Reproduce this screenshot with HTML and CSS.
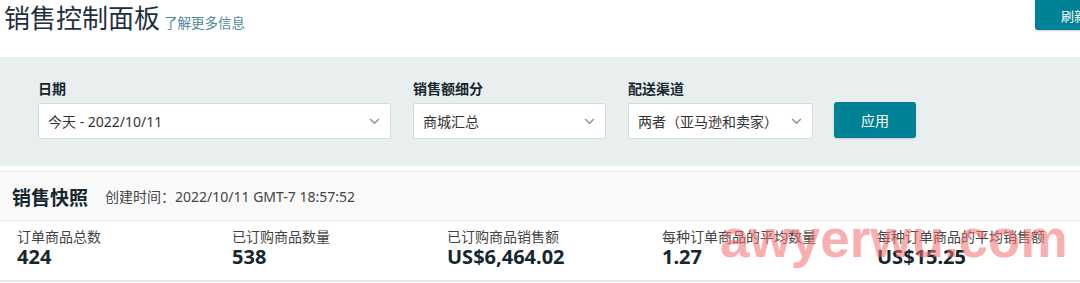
FILE: index.html
```html
<!DOCTYPE html>
<html lang="zh-CN">
<head>
<meta charset="utf-8">
<title>销售控制面板</title>
<link rel="stylesheet" href="styles.css">
</head>
<body>
<div class="page">
  <header class="top">
    <div class="title-wrap">
      <h1 class="title">销售控制面板</h1>
      <a class="learn" href="#">了解更多信息</a>
    </div>
    <button class="refresh">刷新</button>
  </header>

  <section class="filters">
    <div class="field f-date">
      <label class="flabel">日期</label>
      <div class="select"><span>今天 - 2022/10/11</span><svg class="chev" viewBox="0 0 12 8" width="11" height="7"><path d="M1 1.2 L6 6 L11 1.2" fill="none" stroke="#8a9499" stroke-width="1.6"/></svg></div>
    </div>
    <div class="field f-break">
      <label class="flabel">销售额细分</label>
      <div class="select"><span>商城汇总</span><svg class="chev" viewBox="0 0 12 8" width="11" height="7"><path d="M1 1.2 L6 6 L11 1.2" fill="none" stroke="#8a9499" stroke-width="1.6"/></svg></div>
    </div>
    <div class="field f-chan">
      <label class="flabel">配送渠道</label>
      <div class="select"><span>两者（亚马逊和卖家）</span><svg class="chev" viewBox="0 0 12 8" width="11" height="7"><path d="M1 1.2 L6 6 L11 1.2" fill="none" stroke="#8a9499" stroke-width="1.6"/></svg></div>
    </div>
    <button class="apply">应用</button>
  </section>

  <section class="snapshot">
    <h2 class="snap-title">销售快照</h2>
    <span class="snap-time">创建时间：2022/10/11 GMT-7 18:57:52</span>
  </section>

  <section class="metrics">
    <div class="metric"><div class="mlabel">订单商品总数</div><div class="mvalue">424</div></div>
    <div class="metric"><div class="mlabel">已订购商品数量</div><div class="mvalue">538</div></div>
    <div class="metric"><div class="mlabel">已订购商品销售额</div><div class="mvalue">US$6,464.02</div></div>
    <div class="metric"><div class="mlabel">每种订单商品的平均数量</div><div class="mvalue">1.27</div></div>
    <div class="metric"><div class="mlabel">每种订单商品的平均销售额</div><div class="mvalue">US$15.25</div></div>
  </section>

  <div class="watermark">awyerwu.com</div>
</div>
</body>
</html>
```
FILE: styles.css
```css
* { box-sizing: border-box; }
html, body { margin: 0; padding: 0; }
body {
  width: 1080px;
  height: 283px;
  overflow: hidden;
  background: #ffffff;
  font-family: "Noto Sans", "Noto Sans CJK SC", sans-serif;
  color: #111;
}
.page { position: relative; width: 1080px; height: 283px; overflow: hidden; }

.top {
  height: 57px;
  display: flex;
  justify-content: space-between;
  align-items: flex-start;
}
.title-wrap {
  display: flex;
  align-items: baseline;
  padding-left: 4px;
}
.title {
  margin: 0;
  font-family: "Noto Sans CJK SC", sans-serif;
  font-weight: 400;
  font-size: 26px;
  line-height: 34px;
  color: #232f3e;
}
.learn {
  margin-left: 4px;
  font-family: "Noto Sans CJK SC", sans-serif;
  font-size: 13.5px;
  color: #4e8a9a;
  text-decoration: none;
}
.refresh {
  flex: none;
  width: 76px;
  height: 30px;
  margin-right: -31px;
  border: none;
  border-radius: 0 0 0 3px;
  background: #008296;
  color: #fff;
  font-family: "Noto Sans CJK SC", sans-serif;
  font-size: 13px;
  padding: 0 0 0 26px;
  text-align: left;
  white-space: nowrap;
  box-shadow: 0 1px 2px rgba(0,0,0,0.2);
}

.filters {
  height: 109px;
  background: #e9eeef;
  display: flex;
  align-items: flex-end;
  padding: 0 0 27px 38px;
  gap: 22px;
}
.field { display: flex; flex-direction: column; }
.f-date { width: 353px; }
.f-break { width: 193px; }
.f-chan { width: 185px; }
.flabel {
  font-family: "Noto Sans CJK SC", sans-serif;
  font-weight: 700;
  font-size: 14px;
  line-height: 20px;
  color: #16262e;
  margin-bottom: 5px;
}
.select {
  height: 36px;
  background: #fff;
  border: 1px solid #d6dcdd;
  border-radius: 2px;
  display: flex;
  align-items: center;
  justify-content: space-between;
  padding: 0 10px 0 9px;
  font-size: 14px;
  color: #333;
}
.apply {
  width: 82px;
  height: 36px;
  margin-left: -1px;
  margin-bottom: 1px;
  border: none;
  border-radius: 3px;
  background: #008296;
  color: #fff;
  font-family: "Noto Sans CJK SC", sans-serif;
  font-size: 14px;
  box-shadow: 0 1px 2px rgba(0,0,0,0.15);
}

.snapshot {
  margin-top: 5px;
  height: 50px;
  background: #fafafa;
  border-top: 1px solid #e3e6e6;
  border-bottom: 1px solid #e3e6e6;
  display: flex;
  align-items: center;
  padding-left: 12px;
}
.snap-title {
  margin: 0;
  font-family: "Noto Sans CJK SC", sans-serif;
  font-weight: 700;
  font-size: 19px;
  color: #16262e;
}
.snap-time {
  margin-left: 17px;
  font-size: 14px;
  color: #444;
}

.metrics {
  display: grid;
  grid-template-columns: repeat(5, 215px);
  padding: 6px 0 0 17px;
  height: 61px;
  border-bottom: 2px solid #e6e8e8;
}
.mlabel {
  font-family: "Noto Sans CJK SC", sans-serif;
  font-size: 14px;
  line-height: 18px;
  color: #444;
}
.mvalue {
  font-weight: 700;
  font-size: 20px;
  line-height: 24px;
  color: #16262e;
}

.watermark {
  position: absolute;
  left: 720px;
  top: 208px;
  font-family: "Liberation Sans", sans-serif;
  font-weight: 700;
  font-size: 53px;
  color: rgba(244, 110, 110, 0.55);
  pointer-events: none;
}
```
